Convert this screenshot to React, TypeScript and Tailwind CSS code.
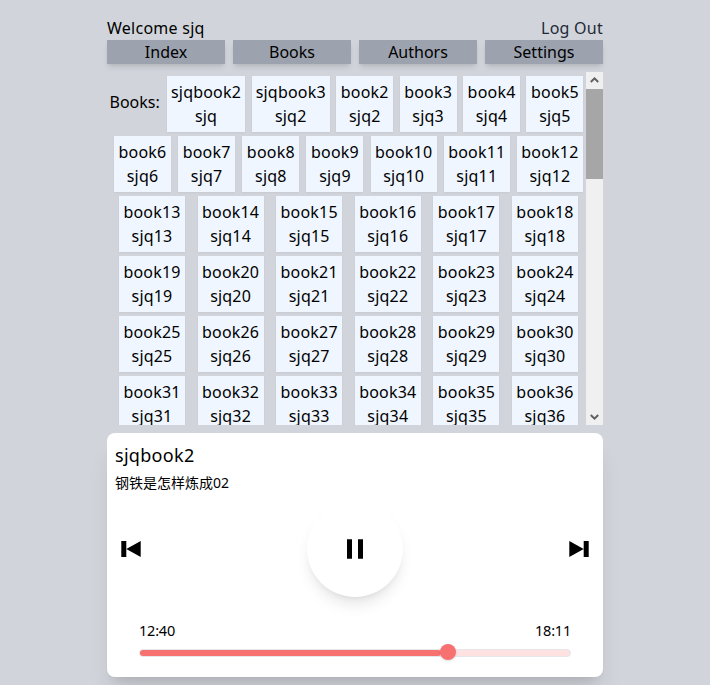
import React from "react";

type Book = { title: string; author: string };
type Row = { books: Book[]; className: string };

const numbered = (from: number, to: number): Book[] =>
  Array.from({ length: to - from + 1 }, (_, i) => ({
    title: `book${from + i}`,
    author: `sjq${from + i}`,
  }));

const rows: Row[] = [
  {
    books: [
      { title: "sjqbook2", author: "sjq" },
      { title: "sjqbook3", author: "sjq2" },
      ...numbered(2, 5),
    ],
    className: "pl-[2.5px] pr-[2.5px]",
  },
  { books: numbered(6, 12), className: "pl-[7px] pr-[3px]" },
  { books: numbered(13, 18), className: "pl-3 pr-2" },
  { books: numbered(19, 24), className: "pl-3 pr-2" },
  { books: numbered(25, 30), className: "pl-3 pr-2" },
  { books: numbered(31, 36), className: "pl-3 pr-2" },
];

function tileWidth(title: string) {
  if (title.startsWith("sjq")) return "w-[78.3px]";
  return title.length > 5 ? "w-[66px]" : "w-[57px]";
}

function BookTile({ title, author }: Book) {
  return (
    <div className={`flex h-14 shrink-0 flex-col items-center whitespace-nowrap bg-[#eff6ff] py-1 tracking-[0.2px] shadow-[0_1px_2px_0_rgba(0,0,0,0.05)] ${tileWidth(title)}`}>
      <span>{title}</span>
      <span>{author}</span>
    </div>
  );
}

function Scrollbar() {
  return (
    <div className="flex w-[17px] shrink-0 flex-col bg-[#f0f0f0]">
      <svg className="h-[17px] w-[17px]" viewBox="0 0 17 17" fill="none" stroke="#606060" strokeWidth="2">
        <path d="M4.8 10 8.5 6.3l3.7 3.7" />
      </svg>
      <div className="h-[90px] bg-[#a6a6a6]" />
      <svg className="mt-auto h-[17px] w-[17px]" viewBox="0 0 17 17" fill="none" stroke="#606060" strokeWidth="2">
        <path d="M4.8 7l3.7 3.7L12.2 7" />
      </svg>
    </div>
  );
}

function Player() {
  return (
    <section className="relative mt-2 flex h-[244px] flex-col rounded-lg bg-white px-2 shadow-xl">
      <h2 className="mt-2 text-[18px] leading-7 tracking-[0.3px]">sjqbook2</h2>
      <p className="mt-1 text-[14px] leading-5">钢铁是怎样炼成02</p>
      <div className="mt-[8px] flex items-center justify-between">
        <button className="flex h-8 w-8 items-center justify-center" aria-label="Previous">
          <svg width="32" height="32" viewBox="0 0 32 32">
            <path d="M6.3 8h5v16h-5zM25.7 8v16L11.3 16z" />
          </svg>
        </button>
        <button className="flex h-24 w-24 items-center justify-center rounded-full bg-white shadow-lg" aria-label="Pause">
          <svg width="32" height="32" viewBox="0 0 32 32">
            <path d="M8 6.3h5v19.4H8zM19 6.3h5v19.4h-5z" />
          </svg>
        </button>
        <button className="flex h-8 w-8 items-center justify-center" aria-label="Next">
          <svg width="32" height="32" viewBox="0 0 32 32">
            <path d="M25.7 8h-5v16h5zM6.3 8v16l14.4-8z" />
          </svg>
        </button>
      </div>
      <div className="mx-6 mt-[23px] flex justify-between text-[14.5px] leading-5 tracking-[-0.2px]">
        <span>12:40</span>
        <span>18:11</span>
      </div>
      <div className="relative mx-6 mt-[9px] h-2 rounded-full border border-gray-200 bg-[#fee2e2]">
        <div className="h-1.5 w-[301px] rounded-full bg-[#f87171]" />
        <div className="absolute -top-[6px] left-[300px] h-4 w-4 rounded-full bg-[#f87171] shadow" />
      </div>
    </section>
  );
}

export default function App() {
  return (
    <div className="h-[685px] overflow-hidden bg-[#d1d5db] pt-4 font-['Noto_Sans','Noto_Sans_CJK_SC',sans-serif] text-base text-black">
      <main className="mx-auto w-[496px]">
        <header className="flex justify-between tracking-[0.25px]">
          <span>Welcome sjq</span>
          <a className="text-[#1f2937]">Log Out</a>
        </header>
        <nav className="grid grid-cols-4 gap-2 text-center">
          {["Index", "Books", "Authors", "Settings"].map((label) => (
            <a key={label} className="h-6 bg-[#9ca3af] shadow-md">
              {label}
            </a>
          ))}
        </nav>
        <div className="mt-2 flex h-[353px] overflow-hidden">
          <div className="flex-1 pt-1">
            {rows.map((row, i) => (
              <div key={i} className={`mb-1 flex items-center justify-between ${row.className}`}>
                {i === 0 && <span className="w-[51px] pb-1">Books:</span>}
                {row.books.map((book) => (
                  <BookTile key={book.title} {...book} />
                ))}
              </div>
            ))}
          </div>
          <Scrollbar />
        </div>
        <Player />
      </main>
    </div>
  );
}
